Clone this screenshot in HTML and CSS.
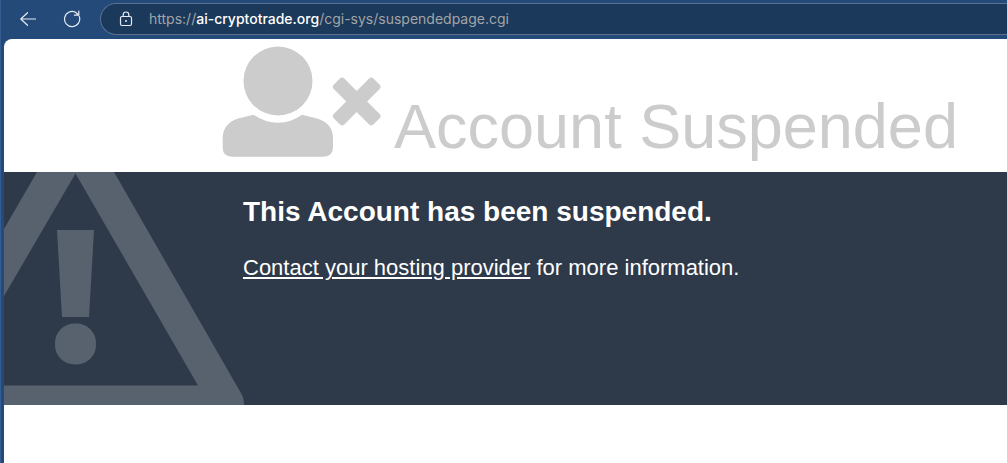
FILE: index.html
```html
<!DOCTYPE html>
<html lang="en">
<head>
  <meta charset="UTF-8">
  <meta name="viewport" content="width=device-width, initial-scale=1.0">
  <title>Account Suspended</title>
  <link rel="stylesheet" href="styles.css">
</head>
<body>

<header class="toolbar">
  <button class="nav-button" type="button" aria-label="Back">
    <svg width="16" height="16" viewBox="0 0 16 16"><path d="M15.500 8H.8M7.500 1.700 .8 8l6.700 6.300"/></svg>
  </button>
  <button class="nav-button" type="button" aria-label="Refresh">
    <svg width="18" height="18" viewBox="0 0 18 18"><path d="M16.300 6.500A7.600 7.600 0 1 1 12.500 2.200L15.800 5.200M15.800 1.200V5.200H11.500"/></svg>
  </button>
  <div class="address-bar">
    <button class="site-info" type="button" aria-label="View site information">
      <svg width="14" height="16" viewBox="0 0 14 16"><rect x="1.500" y="5.500" width="11" height="9" rx="1.500"/><path d="M4.200 5.500V3.800a2.800 2.800 0 0 1 5.600 0v1.700"/><circle class="keyhole" cx="7" cy="10" r="1"/></svg>
    </button>
    <div class="url" role="textbox" contenteditable="true" spellcheck="false" aria-label="Address">https://<span class="domain">ai-cryptotrade.org</span>/cgi-sys/suspendedpage.cgi</div>
  </div>
</header>

<main class="page">
  <div class="title">
    <svg class="user-icon" width="160" height="111" viewBox="0 0 160 111" aria-hidden="true">
      <circle cx="56" cy="35" r="34.500"/>
      <path d="M31.500 68.700Q43 76.700 56 76.700T80 68.700L95 72.500C105 75 111 82 111 92V101Q111 110.700 101.500 110.700H10Q.7 110.700 .7 101.500V92C.7 82 7 75 16 72.500Z"/>
      <g transform="translate(134.700 55.500) rotate(45)">
        <rect x="-28" y="-7.400" width="56" height="14.800" rx="3"/>
        <rect x="-7.400" y="-28" width="14.800" height="56" rx="3"/>
      </g>
    </svg>
    <h1>Account Suspended</h1>
  </div>

  <section class="reason">
    <svg class="warning-icon" width="240" height="233" viewBox="0 0 240 233" aria-hidden="true">
      <path fill-rule="evenodd" d="M33 0H110L237.500 222Q240 226 240 231V233H0V57ZM71.500 1.500 0 124V213.500H194Z"/>
      <path d="M53 58H90L85 145H58Z"/>
      <rect x="51" y="151.500" width="41" height="41" rx="19.500"/>
    </svg>
    <div class="reason-text">
      <h2>This Account has been suspended.</h2>
      <p><a href="#">Contact your hosting provider</a> for more information.</p>
    </div>
  </section>
</main>

</body>
</html>
```
FILE: styles.css
```css
:root {
  --toolbar: #234a79;
  --address: #1b395b;
  --address-border: #5b718f;
  --muted: #cccccc;
  --band: #2e3a4a;
  --band-icon: #58626e;
}

* {
  box-sizing: border-box;
}

body {
  margin: 0;
  min-height: 100vh;
  display: flex;
  flex-direction: column;
  background-color: var(--toolbar);
  border-left: 1px solid #355d91;
  font-family: "Liberation Sans", Arial, sans-serif;
}

/* browser toolbar */
.toolbar {
  display: flex;
  align-items: center;
  padding: 3px 0 4px 11px;
}

.toolbar button {
  display: flex;
  align-items: center;
  justify-content: center;
  padding: 0;
  border: none;
  background: none;
  color: #e6ebf2;
}

.toolbar svg {
  fill: none;
  stroke: currentColor;
  stroke-width: 1.2;
  stroke-linecap: round;
  stroke-linejoin: round;
}

.toolbar .keyhole {
  fill: currentColor;
  stroke: none;
}

.toolbar .nav-button {
  width: 32px;
  height: 32px;
  margin-right: 12px;
}

.address-bar {
  flex: 1;
  display: flex;
  align-items: center;
  gap: 16px;
  height: 32px;
  padding-left: 18px;
  background-color: var(--address);
  border: 1px solid var(--address-border);
  border-right: none;
  border-radius: 16px 0 0 16px;
}

.url {
  flex: 1;
  font-family: Inter, sans-serif;
  font-size: 14px;
  line-height: 20px;
  white-space: nowrap;
  color: #a3a5a6;
  outline: none;
}

.domain {
  color: #ffffff;
  font-weight: 500;
}

/* suspended page */
.page {
  flex: 1;
  margin-left: 3px;
  background-color: #ffffff;
  border-top-left-radius: 8px;
}

.title {
  display: flex;
  align-items: flex-end;
  gap: 12px;
  padding: 7px 0 10px 218px;
  color: var(--muted);
}

.user-icon {
  flex: none;
  margin-bottom: 5px;
  fill: currentColor;
}

.title h1 {
  margin: 0;
  font-size: 63px;
  font-weight: normal;
  line-height: 72px;
  white-space: nowrap;
}

.reason {
  position: relative;
  min-height: 233px;
  padding: 24px 20px 20px 239px;
  background-color: var(--band);
  color: #ffffff;
}

/* sits behind the text */
.warning-icon {
  position: absolute;
  left: 0;
  bottom: 0;
  fill: var(--band-icon);
}

.reason-text {
  position: relative;
}

.reason h2 {
  margin: 0 0 24px;
  font-size: 28px;
  line-height: 32px;
}

.reason p {
  margin: 0;
  font-size: 22px;
  line-height: 32px;
}

.reason a {
  color: inherit;
}
```
